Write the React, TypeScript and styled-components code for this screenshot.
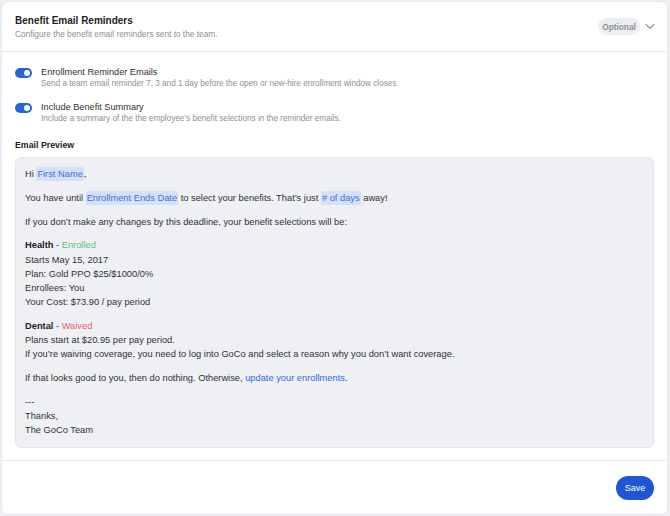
import React from "react";
import styled, { createGlobalStyle } from "styled-components";

const Global = createGlobalStyle`
  html, body { margin: 0; padding: 0; background: #eef0f3; }
  body { font-family: "Liberation Sans", Arial, sans-serif; color: #2f3135; }
  #root { padding: 2px 3px 2px 2px; }
  * { box-sizing: border-box; }
`;

const Card = styled.div`
  background: #fff;
  border-radius: 6px;
  height: 512px;
  display: flex;
  flex-direction: column;
  box-shadow: 0 0 0 1px #e6e8ec;
  overflow: hidden;
`;

const Header = styled.div`
  flex-shrink: 0;
  height: 50px;
  padding: 0 12px 0 13px;
  display: flex;
  align-items: center;
  border-bottom: 1px solid #e4e6ea;
`;

const HeaderText = styled.div`
  flex: 1;
  display: flex;
  flex-direction: column;
  gap: 3px;
  margin-top: 1px;
`;

const Title = styled.div`
  font-size: 10px;
  font-weight: 700;
  color: #222;
`;

const Subtitle = styled.div`
  font-size: 8.3px;
  color: #8b8f97;
`;

const Pill = styled.div`
  height: 17px;
  width: 42px;
  display: flex;
  align-items: center;
  justify-content: center;
  background: #eceef2;
  color: #8b8f97;
  font-size: 8.3px;
  font-weight: 700;
  border-radius: 9px;
  margin-right: 5px;
`;

const Body = styled.div`
  flex: 1;
  padding: 15px 13px 0 13px;
  display: flex;
  flex-direction: column;
  border-bottom: 1px solid #e8eaee;
`;

const ToggleRow = styled.div`
  display: flex;
  align-items: flex-start;
  gap: 9px;
  margin-bottom: 14px;
`;

const Toggle = styled.div`
  width: 17px;
  height: 10px;
  border-radius: 5px;
  background: #2563d9;
  position: relative;
  margin-top: 1px;
  flex-shrink: 0;
  &::after {
    content: "";
    position: absolute;
    right: 2px;
    top: 2px;
    width: 6px;
    height: 6px;
    border-radius: 50%;
    background: #fff;
  }
`;

const ToggleText = styled.div`
  display: flex;
  flex-direction: column;
  gap: 2px;
`;

const ToggleTitle = styled.div`
  font-size: 9.2px;
  color: #2f3135;
`;

const ToggleDesc = styled.div`
  font-size: 8.2px;
  color: #8b8f97;
`;

const SectionLabel = styled.div`
  font-size: 8.8px;
  font-weight: 700;
  color: #222;
  margin-top: 3px;
  margin-bottom: 7px;
`;

const Preview = styled.div`
  background: #eff0f4;
  border: 1px solid #e3e5ea;
  border-radius: 6px;
  padding: 9px 9px 9px 9px;
  font-size: 9.3px;
  line-height: 14.2px;
  color: #2f3135;
`;

const Para = styled.p`
  margin: 0 0 9.6px 0;
  &:last-child { margin-bottom: 0; }
`;

const Token = styled.span`
  background: #d5e1f8;
  color: #3d6fdc;
  padding: 2px 1px;
  border-radius: 2px;
`;

const Strong = styled.span`
  font-weight: 700;
  color: #222;
`;

const Status = styled.span<{ $tone: "good" | "bad" }>`
  color: ${(p) => (p.$tone === "good" ? "#5cbd78" : "#e35d6a")};
`;

const Link = styled.a`
  color: #2f6be0;
  text-decoration: none;
`;

const Footer = styled.div`
  flex-shrink: 0;
  height: 53px;
  display: flex;
  align-items: center;
  justify-content: flex-end;
  padding: 0 13px 0 12px;
`;

const SaveButton = styled.button`
  background: #1e56d6;
  color: #fff;
  border: none;
  border-radius: 12px;
  height: 24px;
  width: 38px;
  font-family: inherit;
  font-size: 9px;
  padding: 0;
`;

const Chevron = () => (
  <svg width="10" height="7" viewBox="0 0 10 7" fill="none">
    <path d="M1 1.3l4 4 4-4" stroke="#8b8f97" strokeWidth="1.2" strokeLinecap="round" strokeLinejoin="round" />
  </svg>
);

export default function App() {
  return (
    <>
      <Global />
      <Card>
        <Header>
          <HeaderText>
            <Title>Benefit Email Reminders</Title>
            <Subtitle>Configure the benefit email reminders sent to the team.</Subtitle>
          </HeaderText>
          <Pill>Optional</Pill>
          <Chevron />
        </Header>
        <Body>
          <ToggleRow>
            <Toggle />
            <ToggleText>
              <ToggleTitle>Enrollment Reminder Emails</ToggleTitle>
              <ToggleDesc>Send a team email reminder 7, 3 and 1 day before the open or new-hire enrollment window closes.</ToggleDesc>
            </ToggleText>
          </ToggleRow>
          <ToggleRow>
            <Toggle />
            <ToggleText>
              <ToggleTitle>Include Benefit Summary</ToggleTitle>
              <ToggleDesc>Include a summary of the the employee’s benefit selections in the reminder emails.</ToggleDesc>
            </ToggleText>
          </ToggleRow>
          <SectionLabel>Email Preview</SectionLabel>
          <Preview>
            <Para>Hi <Token>First Name</Token>,</Para>
            <Para>You have until <Token>Enrollment Ends Date</Token> to select your benefits. That’s just <Token># of days</Token> away!</Para>
            <Para>If you don’t make any changes by this deadline, your benefit selections will be:</Para>
            <Para>
              <Strong>Health</Strong> - <Status $tone="good">Enrolled</Status><br />
              Starts May 15, 2017<br />
              Plan: Gold PPO $25/$1000/0%<br />
              Enrollees: You<br />
              Your Cost: $73.90 / pay period
            </Para>
            <Para>
              <Strong>Dental</Strong> - <Status $tone="bad">Waived</Status><br />
              Plans start at $20.95 per pay period.<br />
              If you’re waiving coverage, you need to log into GoCo and select a reason why you don’t want coverage.
            </Para>
            <Para>If that looks good to you, then do nothing. Otherwise, <Link href="#">update your enrollments</Link>.</Para>
            <Para>
              ---<br />
              Thanks,<br />
              The GoCo Team
            </Para>
          </Preview>
        </Body>
        <Footer>
          <SaveButton>Save</SaveButton>
        </Footer>
      </Card>
    </>
  );
}
